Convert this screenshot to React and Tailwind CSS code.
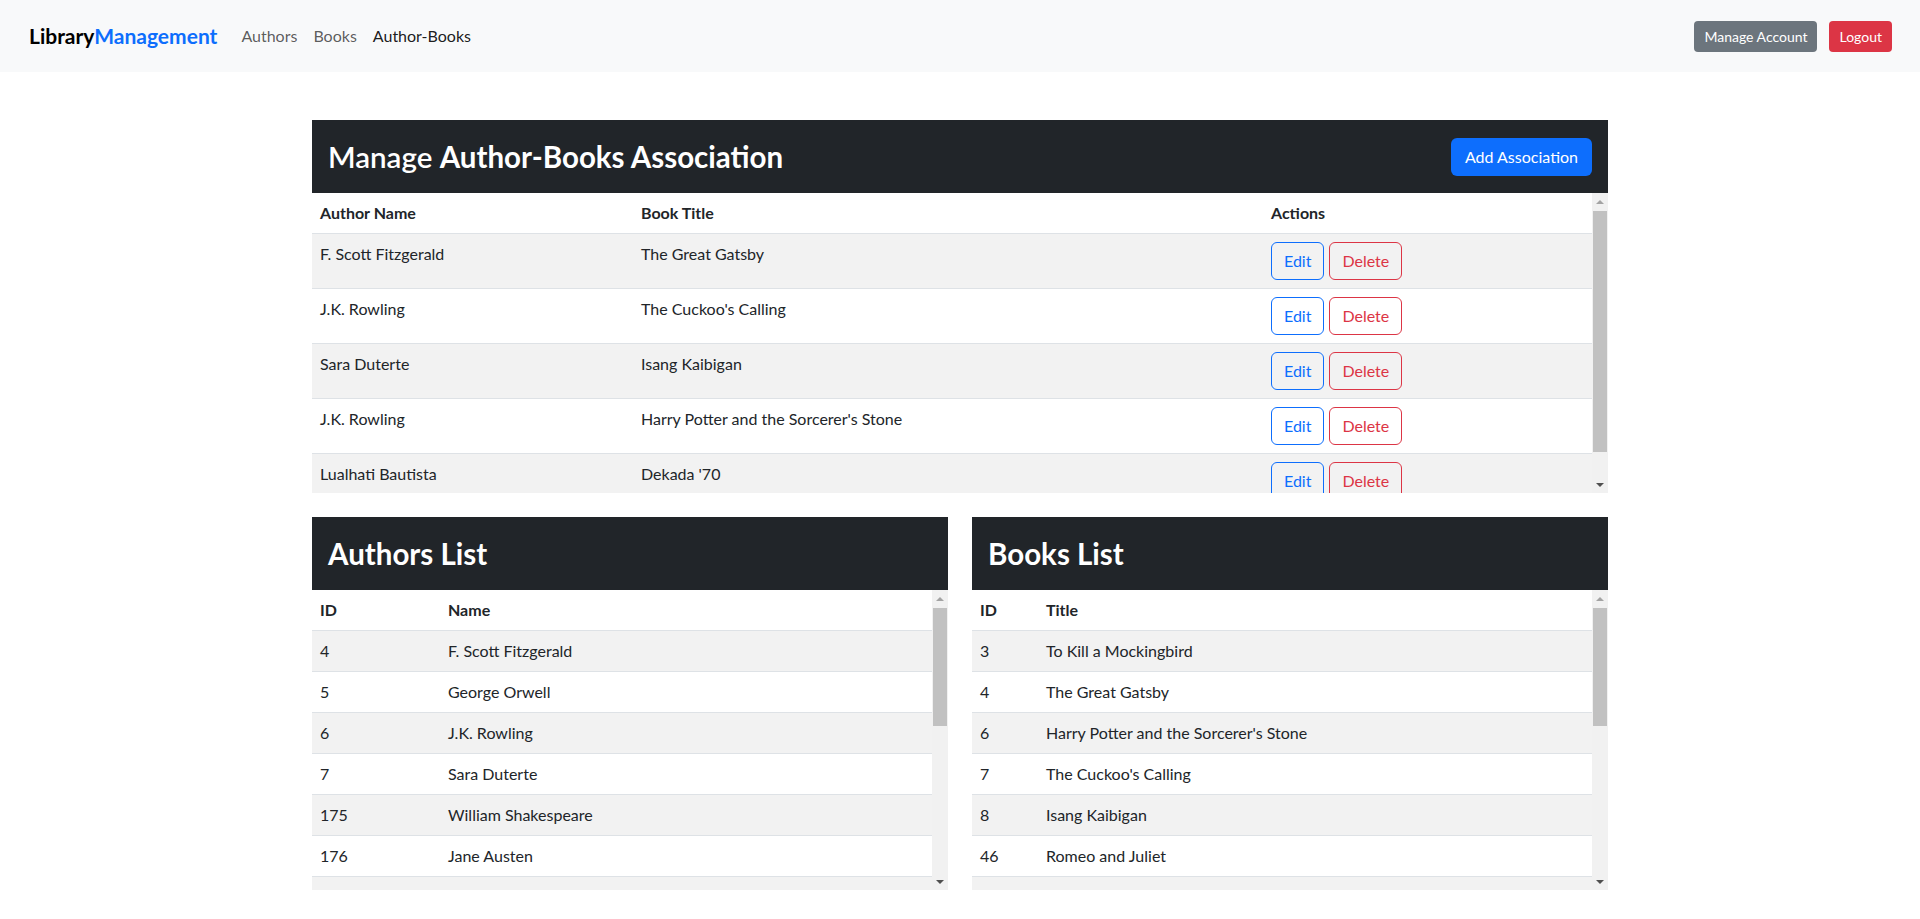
const associations = [
  { author: 'F. Scott Fitzgerald', book: 'The Great Gatsby' },
  { author: 'J.K. Rowling', book: "The Cuckoo's Calling" },
  { author: 'Sara Duterte', book: 'Isang Kaibigan' },
  { author: 'J.K. Rowling', book: "Harry Potter and the Sorcerer's Stone" },
  { author: 'Lualhati Bautista', book: "Dekada '70" },
];

const authors = [
  [4, 'F. Scott Fitzgerald'],
  [5, 'George Orwell'],
  [6, 'J.K. Rowling'],
  [7, 'Sara Duterte'],
  [175, 'William Shakespeare'],
  [176, 'Jane Austen'],
  [177, 'Lualhati Bautista'],
  [178, 'Mark Twain'],
  [179, 'Harper Lee'],
  [180, 'Leo Tolstoy'],
  [181, 'Charles Dickens'],
  [182, 'Jose Rizal'],
  [183, 'Ernest Hemingway'],
  [184, 'Agatha Christie'],
  [185, 'Virginia Woolf'],
];

const books = [
  [3, 'To Kill a Mockingbird'],
  [4, 'The Great Gatsby'],
  [6, "Harry Potter and the Sorcerer's Stone"],
  [7, "The Cuckoo's Calling"],
  [8, 'Isang Kaibigan'],
  [46, 'Romeo and Juliet'],
  [47, "Dekada '70"],
  [48, 'Pride and Prejudice'],
  [49, '1984'],
  [50, 'Animal Farm'],
  [51, 'Noli Me Tangere'],
  [52, 'El Filibusterismo'],
  [53, 'War and Peace'],
  [54, 'Hamlet'],
  [55, 'Oliver Twist'],
];

// classic scrollbar look: track, thumb and the two arrow buttons
function Scrollbar({ thumb }) {
  return (
    <div className="w-[16px] shrink-0 bg-[#f1f1f1] flex flex-col">
      <div className="h-[17px] flex items-center justify-center">
        <svg width="8" height="4" viewBox="0 0 8 4">
          <path d="M0 4 L4 0 L8 4 Z" fill="#a3a3a3" />
        </svg>
      </div>
      <div className="flex-1 px-[1px] pt-[1px]">
        <div className={`${thumb} bg-[#c1c1c1]`} />
      </div>
      <div className="h-[17px] flex items-center justify-center">
        <svg width="8" height="4" viewBox="0 0 8 4">
          <path d="M0 0 L8 0 L4 4 Z" fill="#505050" />
        </svg>
      </div>
    </div>
  );
}

function ScrollArea({ thumb, children }) {
  return (
    <div className="flex h-[300px]">
      <div className="flex-1 min-w-0 overflow-y-auto [scrollbar-width:none]">{children}</div>
      <Scrollbar thumb={thumb} />
    </div>
  );
}

function CardHeader({ children }) {
  return (
    <div className="bg-[#212529] h-[73px] flex items-center justify-between px-4">
      {children}
    </div>
  );
}

function SimpleList({ title, colLabel, rows, idWidth }) {
  return (
    <section>
      <CardHeader>
        <h2 className="text-[29.5px] font-bold text-white leading-[1.2]">{title}</h2>
      </CardHeader>
      <ScrollArea thumb="h-[118px]">
        <table className="w-full table-fixed mb-4 border-collapse text-[16px]">
          <thead>
            <tr className="border-b border-[#dee2e6]">
              <th className={`text-left font-bold px-2 py-2 ${idWidth}`}>ID</th>
              <th className="text-left font-bold px-2 py-2">{colLabel}</th>
            </tr>
          </thead>
          <tbody>
            {rows.map(([id, name], i) => (
              <tr key={id} className={`border-b border-[#dee2e6] ${i % 2 === 0 ? 'bg-[#f2f2f2]' : 'bg-white'}`}>
                <td className="px-2 py-2">{id}</td>
                <td className="px-2 py-2">{name}</td>
              </tr>
            ))}
          </tbody>
        </table>
      </ScrollArea>
    </section>
  );
}

export default function App() {
  return (
    <div className="min-h-screen bg-white text-[#212529] font-['Segoe_UI','Lato',sans-serif] leading-6">
      {/* Navbar */}
      <nav className="bg-[#f8f9fa] h-[72px] flex items-center justify-between pl-[29px] pr-[28px]">
        <div className="flex items-center">
          <a className="text-[21px] font-bold text-black mr-4">
            Library<span className="text-[#0d6efd]">Management</span>
          </a>
          <a className="px-2 text-[16px] text-[#000000a6]">Authors</a>
          <a className="px-2 text-[16px] text-[#000000a6]">Books</a>
          <a className="px-2 text-[16px] text-[#000000e6]">Author-Books</a>
        </div>
        <div className="flex items-center gap-3">
          <button className="bg-[#6c757d] text-white text-[14px] leading-[21px] px-[10px] py-[5px] rounded">
            Manage Account
          </button>
          <button className="bg-[#dc3545] text-white text-[14px] leading-[21px] px-[10px] py-[5px] rounded">
            Logout
          </button>
        </div>
      </nav>

      <main className="w-[1296px] mx-auto mt-12 pb-7">
        {/* Association table */}
        <section className="mb-6">
          <CardHeader>
            <h2 className="text-[29.5px] font-semibold text-white leading-[1.2]">
              Manage <strong className="font-bold">Author-Books Association</strong>
            </h2>
            <button className="bg-[#0d6efd] text-white text-[16px] px-[14px] py-[7px] rounded-md">
              Add Association
            </button>
          </CardHeader>
          <ScrollArea thumb="h-[241px]">
            <table className="w-full table-fixed mb-4 border-collapse text-[16px]">
              <thead>
                <tr className="border-b border-[#dee2e6]">
                  <th className="text-left font-bold px-2 py-2 w-[321px]">Author Name</th>
                  <th className="text-left font-bold px-2 py-2 w-[630px]">Book Title</th>
                  <th className="text-left font-bold px-2 py-2">Actions</th>
                </tr>
              </thead>
              <tbody>
                {associations.map((a, i) => (
                  <tr key={i} className={`border-b border-[#dee2e6] ${i % 2 === 0 ? 'bg-[#f2f2f2]' : 'bg-white'}`}>
                    <td className="px-2 py-2 align-top">{a.author}</td>
                    <td className="px-2 py-2 align-top">{a.book}</td>
                    <td className="px-2 py-2 align-top">
                      <div className="flex gap-[5px]">
                        <button className="border border-[#0d6efd] text-[#0d6efd] rounded-md px-3 py-[6px] text-[16px]">
                          Edit
                        </button>
                        <button className="border border-[#dc3545] text-[#dc3545] rounded-md px-3 py-[6px] text-[16px]">
                          Delete
                        </button>
                      </div>
                    </td>
                  </tr>
                ))}
              </tbody>
            </table>
          </ScrollArea>
        </section>

        {/* Authors / Books */}
        <div className="grid grid-cols-2 gap-6">
          <SimpleList title="Authors List" colLabel="Name" rows={authors} idWidth="w-[128px]" />
          <SimpleList title="Books List" colLabel="Title" rows={books} idWidth="w-[66px]" />
        </div>
      </main>
    </div>
  );
}
